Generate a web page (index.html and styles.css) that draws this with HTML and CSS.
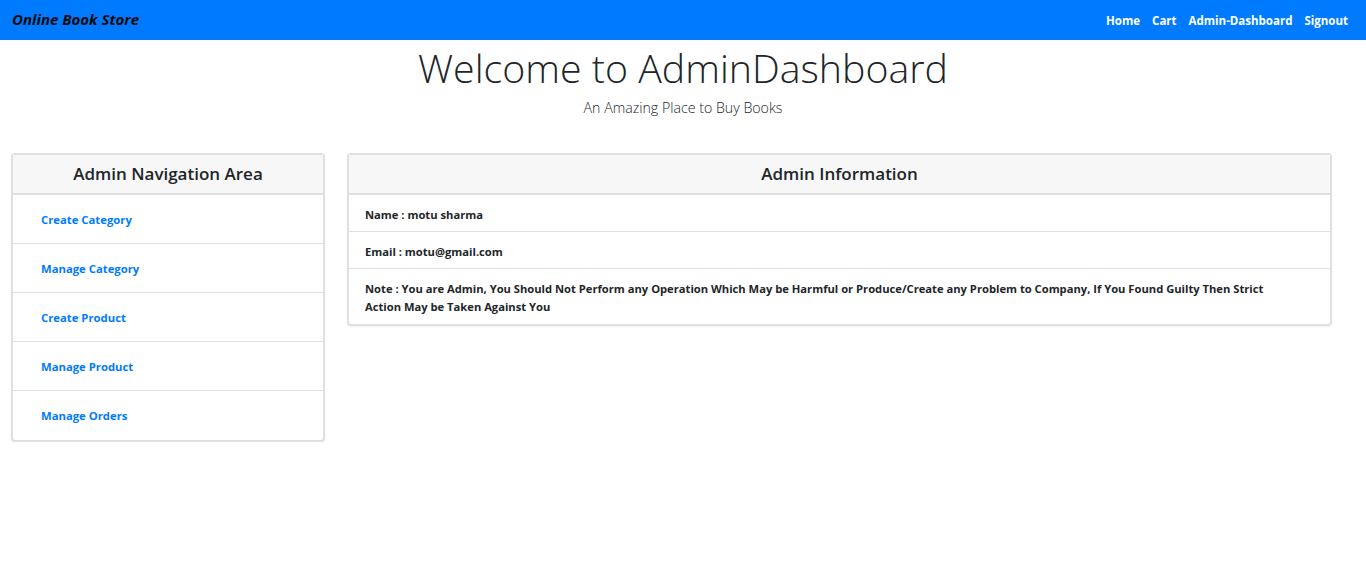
FILE: index.html
```html
<!DOCTYPE html>
<html lang="en">
<head>
<meta charset="utf-8">
<title>Admin Dashboard</title>
<link rel="stylesheet" href="styles.css">
</head>
<body>
<nav class="navbar">
  <a class="brand" href="#">Online Book Store</a>
  <ul class="nav-links">
    <li><a href="#">Home</a></li>
    <li><a href="#">Cart</a></li>
    <li><a href="#">Admin-Dashboard</a></li>
    <li><a href="#">Signout</a></li>
  </ul>
</nav>
<header class="hero">
  <h1 class="hero-title">Welcome to AdminDashboard</h1>
  <p class="hero-sub">An Amazing Place to Buy Books</p>
</header>
<main class="content">
  <section class="card nav-card">
    <h2 class="card-header">Admin Navigation Area</h2>
    <ul class="list">
      <li class="list-item link-item"><a href="#">Create Category</a></li>
      <li class="list-item link-item"><a href="#">Manage Category</a></li>
      <li class="list-item link-item"><a href="#">Create Product</a></li>
      <li class="list-item link-item"><a href="#">Manage Product</a></li>
      <li class="list-item link-item"><a href="#">Manage Orders</a></li>
    </ul>
  </section>
  <section class="card info-card">
    <h2 class="card-header">Admin Information</h2>
    <ul class="list">
      <li class="list-item info-item">Name : motu sharma</li>
      <li class="list-item info-item">Email : motu@gmail.com</li>
      <li class="list-item info-item note">Note : You are Admin, You Should Not Perform any Operation Which May be Harmful or Produce/Create any Problem to Company, If You Found Guilty Then Strict Action May be Taken Against You</li>
    </ul>
  </section>
</main>
</body>
</html>
```

FILE: styles.css
```css
* { box-sizing: border-box; }
html, body { margin: 0; padding: 0; }
body {
  font-family: "Open Sans", "Noto Sans", sans-serif;
  color: #212529;
  background: #fff;
}
a { text-decoration: none; }

.navbar {
  height: 40px;
  background: #007bff;
  display: flex;
  align-items: center;
  justify-content: space-between;
  padding: 0 12px 2px;
}
.brand {
  color: #0a0a0a;
  font-weight: 700;
  font-style: italic;
  font-size: 15px;
}
.nav-links {
  list-style: none;
  margin: 0;
  padding: 0;
  display: flex;
  gap: 12px;
  padding-right: 6px;
}
.nav-links a {
  color: #fff;
  font-weight: 700;
  font-size: 11.5px;
}

.hero {
  text-align: center;
  padding-top: 2px;
}
.hero-title {
  margin: 0;
  font-weight: 300;
  font-size: 39.3px;
  line-height: 52px;
  color: #212529;
}
.hero-sub {
  margin: 4px 0 0;
  font-weight: 300;
  font-size: 14.2px;
  line-height: 20px;
}

.content {
  display: flex;
  align-items: flex-start;
  padding: 35px 0 0 11px;
  gap: 22px;
}
.card {
  border: 2px solid #e0e0e0;
  border-radius: 4px;
  background: #fff;
  box-shadow: 0 1px 2px rgba(0,0,0,0.06);
}
.nav-card { width: 314px; }
.info-card { width: 985px; }
.card-header {
  margin: 0;
  height: 40px;
  background: #f7f7f7;
  border-bottom: 2px solid #e0e0e0;
  text-align: center;
  font-size: 17px;
  font-weight: 600;
  line-height: 38px;
  color: #212529;
}
.list {
  list-style: none;
  margin: 0;
  padding: 0;
}
.list-item {
  border-bottom: 1px solid #e0e0e0;
}
.list-item:last-child { border-bottom: 0; }
.link-item {
  height: 49px;
  display: flex;
  align-items: center;
  padding-left: 28px;
}
.link-item a {
  color: #007bff;
  font-weight: 700;
  font-size: 11.3px;
}
.info-item {
  padding: 11px 40px 7px 16px;
  font-size: 11.2px;
  font-weight: 700;
  line-height: 18px;
  color: #212529;
}
.info-item.note { padding-bottom: 8px; }
```
